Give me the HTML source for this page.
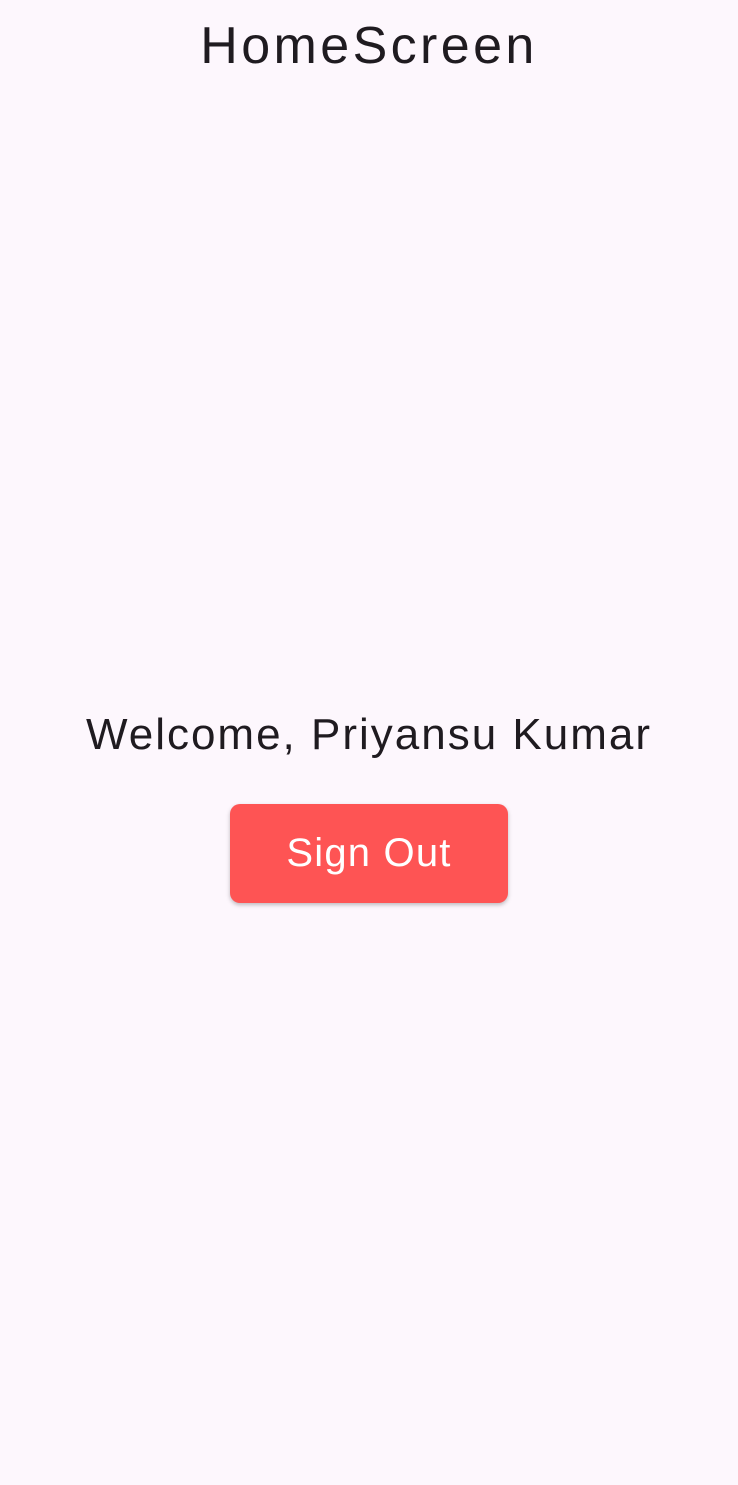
<!DOCTYPE html>
<html><head><meta charset="utf-8"><style>
html,body{margin:0;padding:0;}
body{width:738px;height:1485px;background:#fdf7fd;position:relative;overflow:hidden;font-family:"Liberation Sans",sans-serif;color:#1f1b20;}
.title{position:absolute;top:14px;left:0;width:738px;text-align:center;font-size:52px;line-height:64px;letter-spacing:3.4px;}
.welcome{position:absolute;top:707px;left:0;width:738px;text-align:center;font-size:44px;line-height:56px;letter-spacing:2px;}
.btn{position:absolute;left:230px;top:804px;width:278px;height:99px;background:#fe5454;border-radius:10px;box-shadow:0 2px 4px rgba(0,0,0,0.25);color:#fff;font-size:40px;line-height:99px;text-align:center;letter-spacing:1.2px;}
</style></head><body>
<div class="title">HomeScreen</div>
<div class="welcome">Welcome, Priyansu Kumar</div>
<div class="btn">Sign Out</div>
</body></html>
